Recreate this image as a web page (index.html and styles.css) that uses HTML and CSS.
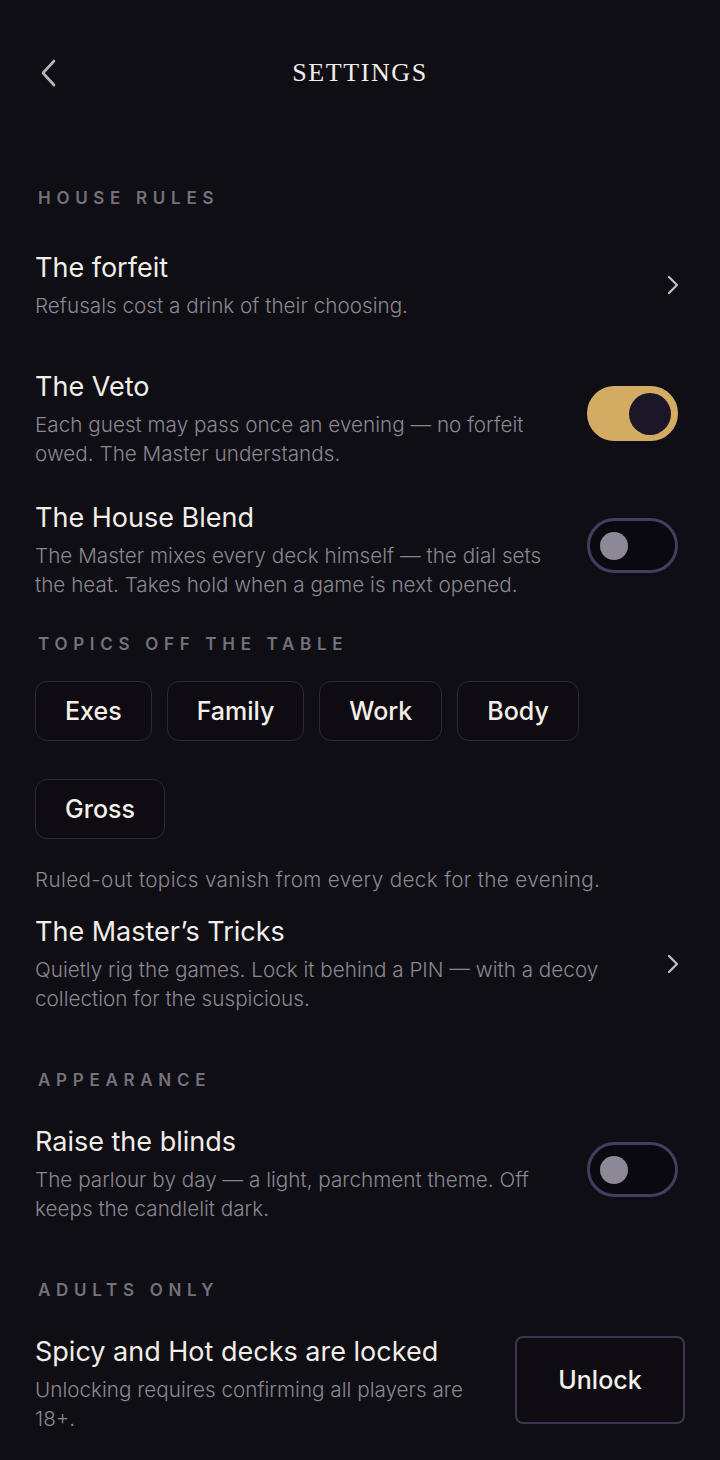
FILE: index.html
```html
<!DOCTYPE html>
<html lang="en">
<head>
  <meta charset="UTF-8" />
  <meta name="viewport" content="width=device-width, initial-scale=1.0"/>
  <title>Settings</title>
  <link rel="stylesheet" href="styles.css">
</head>
<body>
  <div class="screen">
    <header class="topbar">
      <button class="back-btn" aria-label="Back">
        <svg width="24" height="30" viewBox="0 0 24 30"><path d="M16 3 L5 15 L16 27" fill="none" stroke="#b7b4ba" stroke-width="2.6" stroke-linecap="round" stroke-linejoin="round"/></svg>
      </button>
      <h1>SETTINGS</h1>
    </header>

    <h2 class="section-label first">HOUSE RULES</h2>

    <div class="row row-forfeit">
      <div class="row-text">
        <h3>The forfeit</h3>
        <p>Refusals cost a drink of their choosing.</p>
      </div>
      <svg class="chevron" width="16" height="22" viewBox="0 0 16 22"><path d="M4 3 L12 11 L4 19" fill="none" stroke="#c3c0c7" stroke-width="2.2" stroke-linecap="round" stroke-linejoin="round"/></svg>
    </div>

    <div class="row row-veto">
      <div class="row-text">
        <h3>The Veto</h3>
        <p>Each guest may pass once an evening — no forfeit owed. The Master understands.</p>
      </div>
      <div class="toggle on"><span class="knob"></span></div>
    </div>

    <div class="row row-blend">
      <div class="row-text">
        <h3>The House Blend</h3>
        <p>The Master mixes every deck himself — the dial sets the heat. Takes hold when a game is next opened.</p>
      </div>
      <div class="toggle"><span class="knob"></span></div>
    </div>

    <h2 class="section-label topics">TOPICS OFF THE TABLE</h2>

    <div class="chips">
      <span class="chip">Exes</span>
      <span class="chip">Family</span>
      <span class="chip">Work</span>
      <span class="chip">Body</span>
      <span class="chip">Gross</span>
    </div>

    <p class="note">Ruled-out topics vanish from every deck for the evening.</p>

    <div class="row row-tricks">
      <div class="row-text">
        <h3>The Master’s Tricks</h3>
        <p>Quietly rig the games. Lock it behind a PIN — with a decoy collection for the suspicious.</p>
      </div>
      <svg class="chevron" width="16" height="22" viewBox="0 0 16 22"><path d="M4 3 L12 11 L4 19" fill="none" stroke="#c3c0c7" stroke-width="2.2" stroke-linecap="round" stroke-linejoin="round"/></svg>
    </div>

    <h2 class="section-label spaced">APPEARANCE</h2>

    <div class="row row-blinds">
      <div class="row-text">
        <h3>Raise the blinds</h3>
        <p>The parlour by day — a light, parchment theme. Off keeps the candlelit dark.</p>
      </div>
      <div class="toggle"><span class="knob"></span></div>
    </div>

    <h2 class="section-label spaced">ADULTS ONLY</h2>

    <div class="row row-adults">
      <div class="row-text">
        <h3>Spicy and Hot decks are locked</h3>
        <p>Unlocking requires confirming all players are 18+.</p>
      </div>
      <button class="unlock-btn">Unlock</button>
    </div>
  </div>
</body>
</html>
```

FILE: styles.css
```css
body {
  margin: 0;
  background-color: #100e15;
  color: #efebe4;
  font-family: Inter, "Noto Sans", sans-serif;
}

.screen {
  width: 720px;
  min-height: 1460px;
  padding: 0 35px;
  box-sizing: border-box;
}

.topbar {
  position: relative;
  height: 56px;
  margin-top: 45px;
  display: flex;
  align-items: center;
  justify-content: center;
}

.back-btn {
  position: absolute;
  left: 3px;
  top: 13px;
  background: none;
  border: none;
  padding: 0;
  cursor: pointer;
}

.topbar h1 {
  margin: 0;
  font-family: "Liberation Serif", serif;
  font-weight: normal;
  font-size: 26px;
  letter-spacing: 1.6px;
  color: #f2efe9;
}

.section-label {
  margin: 0;
  height: 20px;
  line-height: 20px;
  padding-left: 3px;
  font-size: 17px;
  font-weight: 600;
  letter-spacing: 5.7px;
  color: #74717b;
}

.section-label.first {
  margin-top: 87px;
}

.section-label.topics {
  margin-top: 35px;
}

.section-label.spaced {
  margin-top: 57px;
}

.row {
  display: flex;
  align-items: center;
  justify-content: space-between;
  gap: 24px;
}

.row-text {
  flex: 1;
}

.row h3 {
  margin: 0;
  font-size: 27px;
  font-weight: 400;
  line-height: 36px;
  color: #f1ede7;
}

.row p {
  margin: 5px 0 0;
  font-size: 20.7px;
  font-weight: 300;
  line-height: 29px;
  color: #8a8791;
}

.row-forfeit {
  margin-top: 42px;
}

.row-veto {
  margin-top: 49px;
}

.row-blend {
  margin-top: 32px;
}

.row-tricks {
  margin-top: 20px;
}

.row-blinds,
.row-adults {
  margin-top: 34px;
}

.chevron {
  margin-right: 4px;
}

.toggle {
  flex-shrink: 0;
  width: 91px;
  height: 55px;
  box-sizing: border-box;
  border-radius: 28px;
  border: 3px solid #433d5e;
  background-color: #0b0910;
  display: flex;
  align-items: center;
  padding: 0 10px;
  margin: 0 7px 8px 0;
}

.toggle .knob {
  width: 28px;
  height: 28px;
  border-radius: 50%;
  background-color: #8d8896;
}

.toggle.on {
  border-color: #d4ab62;
  background-color: #d4ab62;
  justify-content: flex-end;
  padding: 0 4px;
  margin-bottom: 10px;
}

.toggle.on .knob {
  width: 42px;
  height: 42px;
  background-color: #1c1728;
}

.chips {
  margin-top: 27px;
  display: flex;
  flex-wrap: wrap;
  column-gap: 15px;
  row-gap: 38px;
}

.chip {
  height: 60px;
  box-sizing: border-box;
  padding: 0 29px;
  display: flex;
  align-items: center;
  border: 1px solid #2c2935;
  border-radius: 12px;
  background-color: #0e0c12;
  font-size: 25px;
  font-weight: 500;
  color: #f3efe9;
}

.note {
  margin: 26px 0 0;
  font-size: 20.7px;
  font-weight: 300;
  line-height: 29px;
  letter-spacing: 0.35px;
  color: #8a8791;
}

.unlock-btn {
  flex-shrink: 0;
  width: 170px;
  height: 88px;
  margin-bottom: 8px;
  background-color: #0e0c12;
  border: 2px solid #3b3552;
  border-radius: 8px;
  color: #f3efe9;
  font-family: Inter, "Noto Sans", sans-serif;
  font-size: 25px;
  font-weight: 500;
  cursor: pointer;
}
```
